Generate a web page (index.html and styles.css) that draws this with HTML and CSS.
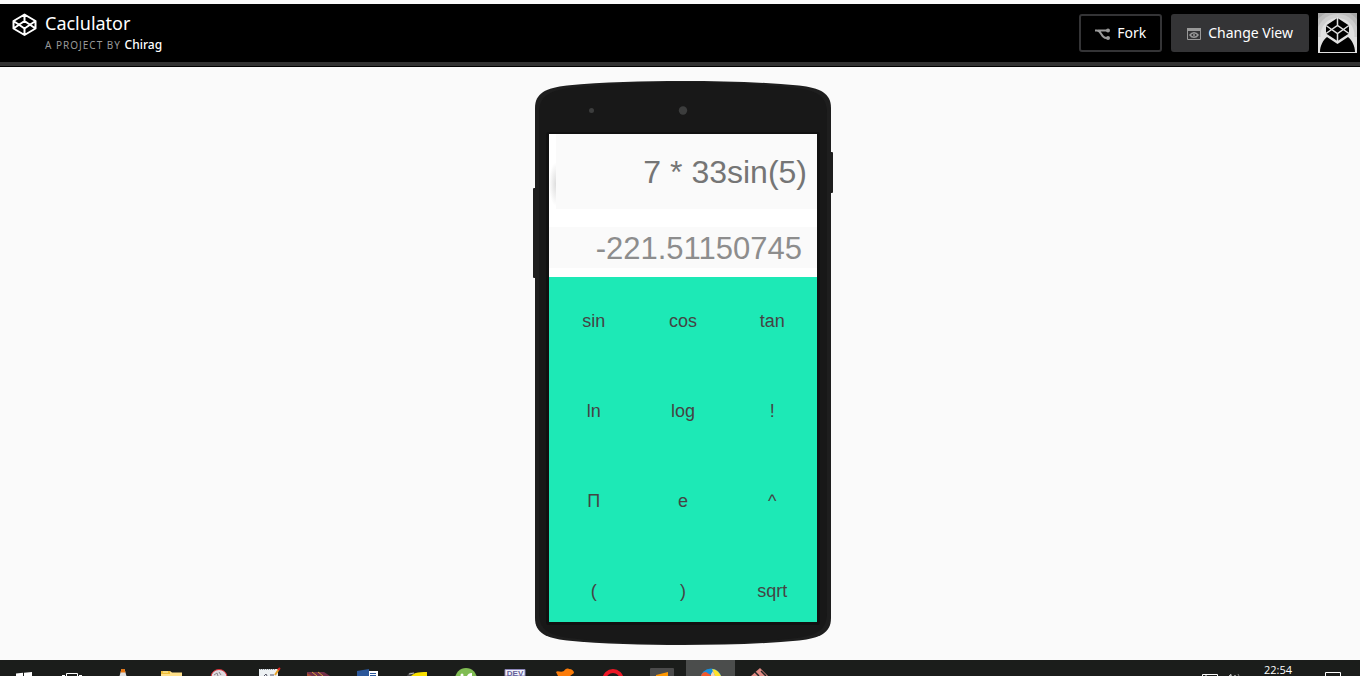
FILE: index.html
```html
<!DOCTYPE html>
<html lang="en">
<head>
<meta charset="utf-8">
<title>Caclulator</title>
<link rel="stylesheet" href="styles.css">
</head>
<body>
<header class="topbar">
  <a class="logo" href="#" aria-label="Home">
    <svg width="25" height="24" viewBox="0 0 25 24" fill="none" stroke="#fff" stroke-width="2" stroke-linejoin="round"><path d="M12.500 1.500 23.500 8v7.500l-11 6.500-11-6.500V8zM12.500 1.500V8M12.500 15.500V22M1.500 8l11 7.500 11-7.500M1.500 15.500l11-7.500 11 7.500"/></svg>
  </a>
  <div class="heading">
    <h1 class="title">Caclulator</h1>
    <p class="byline">A PROJECT BY <a class="author" href="#">Chirag</a></p>
  </div>
  <div class="actions">
    <button class="btn btn-fork" type="button">
      <svg width="15" height="14" viewBox="0 0 15 14" fill="none" stroke="#999" stroke-width="2"><path d="M0 3.500h2c4.500 0 4 7.500 9 7.500h2M3 3.500h10"/><circle cx="13" cy="3.500" r="2" fill="#999" stroke="none"/><circle cx="13" cy="11" r="2" fill="#999" stroke="none"/></svg>
      Fork
    </button>
    <button class="btn btn-view" type="button">
      <svg width="14" height="12" viewBox="0 0 14 12" fill="none" stroke="#999"><path d="M.5.5h13v11H.5z"/><path d="M0 1.500h14" stroke-width="3"/><path d="M3 7c2-3 6-3 8 0-2 3-6 3-8 0z" stroke-width="1.500"/><circle cx="7" cy="7" r="1" fill="#999" stroke="none"/></svg>
      Change View
    </button>
    <a class="avatar" href="#" aria-label="Profile">
      <svg width="39" height="40" viewBox="0 0 39 40"><path fill="#a8a8a8" d="M0 0h39v40H0z"/><circle cx="19.500" cy="22" r="25" fill="#bcbcbc"/><circle cx="19.500" cy="22" r="21" fill="#cecece"/><circle cx="19.500" cy="22" r="17" fill="#e0e0e0"/><path fill="#e0e0e0" d="M0 24h39v16H0z"/><path d="M2 39c0-6 3-12 7-15l10.500 7L30 24c4 3 7 9 7 15z"/><path d="M19.500 5 31 12.500v8L19.500 28 8 20.500v-8z"/><path d="M19.500 4v8.500M19.500 20.500V28M8 12.500l11.500 8 11.500-8M8 20.500l11.500-8 11.500 8" fill="none" stroke="#e0e0e0" stroke-width="1.500"/></svg>
    </a>
  </div>
</header>

<main class="stage">
  <div class="phone">
    <svg class="shell" width="300" height="564" viewBox="0 0 300 564">
      <rect x="0" y="107" width="6" height="90" rx="1" fill="#1e1e1e"/>
      <rect x="294" y="71" width="6" height="41" rx="1" fill="#1e1e1e"/>
      <path fill="#1e1e1e" d="M2 27C2 12 13 7 34 4.500 70 1 110 0 150 0s80 1 116 4.500C287 7 298 12 298 27V537c0 15-11 20-32 22.500C230 563 190 564 150 564s-80-1-116-4.500C13 557 2 552 2 537z"/>
      <path fill="#181818" d="M6 32C6 15 16 10 36 7 70 3 110 1 150 1s80 2 114 6c20 3 30 8 30 25V532c0 17-10 22-30 25-34 4-74 6-114 6s-80-2-114-6C16 554 6 549 6 532z"/>
      <circle cx="58.500" cy="29.500" r="2.500" fill="#3c3d3d"/>
      <circle cx="150" cy="29.500" r="4.200" fill="#3c3d3d"/>
    </svg>
    <div class="screen">
      <div class="expression-row">
        <input class="expression" type="text" aria-label="Expression" value="7 * 33sin(5)" readonly>
      </div>
      <div class="result-row">
        <input class="result" type="text" aria-label="Result" value="-221.51150745" readonly>
      </div>
      <div class="keypad">
        <button class="key" type="button">sin</button>
        <button class="key" type="button">cos</button>
        <button class="key" type="button">tan</button>
        <button class="key" type="button">ln</button>
        <button class="key" type="button">log</button>
        <button class="key" type="button">!</button>
        <button class="key" type="button">Π</button>
        <button class="key" type="button">e</button>
        <button class="key" type="button">^</button>
        <button class="key" type="button">(</button>
        <button class="key" type="button">)</button>
        <button class="key" type="button">sqrt</button>
      </div>
    </div>
  </div>
</main>

<footer class="taskbar">
  <button class="task" type="button" aria-label="Start"><svg width="49" height="16" viewBox="0 0 49 16" fill="#fff"><path d="M16 13.500 23 12.800V16h-7zM24 12.700 32 12v4h-8z"/></svg></button>
  <button class="task" type="button" aria-label="Task view"><svg width="49" height="16" viewBox="0 0 49 16" fill="none" stroke="#fff"><path d="M17.500 17v-3.500h11V17M13 15.500h3M30 15.500h3"/></svg></button>
  <button class="task" type="button" aria-label="Media player"><svg width="49" height="16" viewBox="0 0 49 16"><path d="M23.500 9h3l2 7h-7z" fill="#ddd"/><path d="M23.500 9h3l1 3.500h-5z" fill="#e8730c"/></svg></button>
  <button class="task" type="button" aria-label="Files"><svg width="49" height="16" viewBox="0 0 49 16"><path d="M14 11h9l2 1.500h10V16H14z" fill="#ffe08a"/><path d="M14 11h9v3h-9z" fill="#efbe38"/><path d="M16 12h5" stroke="#fff3ba"/></svg></button>
  <button class="task" type="button" aria-label="Paint tool"><svg width="49" height="16" viewBox="0 0 49 16"><ellipse cx="23" cy="17" rx="8" ry="7.500" fill="#ded9df" stroke="#df2932"/><path d="m18 15 3-2 1 3m1-4 2 3" stroke="#888" fill="none"/></svg></button>
  <button class="task" type="button" aria-label="Notes"><svg width="49" height="16" viewBox="0 0 49 16"><path d="M14 9h19v7H14z" fill="#edf1f3"/><path d="M15 9.500h16" stroke="#8c9398" stroke-dasharray="1 1"/><path d="m19 16 2-2 1 2M25 15h4" stroke="#556" fill="none"/><path d="m30 15 4-6" stroke="#e9a42b" stroke-width="2"/><path d="m33 10 2-2" stroke="#d22" stroke-width="2"/></svg></button>
  <button class="task" type="button" aria-label="Archive"><svg width="49" height="16" viewBox="0 0 49 16"><path d="M13 12h17l6 4H13z" fill="#733049"/><path d="m18 12 5 4M24 12l5 4" stroke="#d6a43b"/><path d="m13 13 5 3h-5z" fill="#a44b32"/></svg></button>
  <button class="task" type="button" aria-label="Documents"><svg width="49" height="16" viewBox="0 0 49 16"><path d="M25 11h10v5H25z" fill="#fff"/><path d="M27 13.500h6M27 15.500h6" stroke="#2b579a"/><path d="m14 11 12-2v7H14z" fill="#2b579a"/></svg></button>
  <button class="task" type="button" aria-label="Editor"><svg width="49" height="16" viewBox="0 0 49 16"><path d="M17 16c3-3 9-4 18-4v4z" fill="#f9e000"/><path d="M16 14c2-2 4-2 7-1l-4 3h-4z" fill="#444"/><path d="m17 14 5-1" stroke="#bbb"/></svg></button>
  <button class="task" type="button" aria-label="Downloads"><svg width="49" height="16" viewBox="0 0 49 16"><circle cx="25" cy="19" r="11" fill="#80bc53"/><circle cx="21" cy="15" r="1.500" fill="#fff"/><path d="M26 16c1-2 2-3 5-3v3z" fill="#fff"/></svg></button>
  <button class="task" type="button" aria-label="Dev"><svg width="49" height="16" viewBox="0 0 49 16"><path d="M15 9.500h20V16H15z" fill="#f0f0fa" stroke="#8c85b9"/><text class="dev-text" x="25" y="16" text-anchor="middle" fill="#666199">DEV</text></svg></button>
  <button class="task" type="button" aria-label="Game"><svg width="49" height="16" viewBox="0 0 49 16"><path d="M17 12c2-2 4 1 8-1 1-2 3-3 5-2 3 0 5 2 5 4l-4 3H19z" fill="#fb7b08"/></svg></button>
  <button class="task" type="button" aria-label="Opera"><svg width="49" height="16" viewBox="0 0 49 16"><ellipse cx="25" cy="19" rx="8.500" ry="8" fill="none" stroke="#ed1725" stroke-width="4"/></svg></button>
  <button class="task" type="button" aria-label="Sublime"><svg width="49" height="16" viewBox="0 0 49 16"><rect x="13" y="8" width="24" height="12" rx="1" fill="#4b4b4b"/><path d="m19 15 12-3v4H19z" fill="#ff9800"/></svg></button>
  <button class="task task-active" type="button" aria-label="Browser"><svg width="49" height="16" viewBox="0 0 49 16"><circle cx="25" cy="19" r="10.500" fill="#168ddb"/><path d="M15 16c1-3 2-4 5-4l6 4z" fill="#f1592c"/><path d="M26 9c4 0 7 3 9 7h-6z" fill="#ffe12b"/><path d="m25 14 2-3 2 5h-4z" fill="#f4d4b6"/></svg></button>
  <button class="task" type="button" aria-label="Git"><svg width="49" height="16" viewBox="0 0 49 16"><path d="m16 16 9-8 8 8z" fill="#e08a83"/><path d="m20 12 4 4M26 11l5 5" stroke="#252525" stroke-width="1.500"/></svg></button>
  <div class="tray">
    <svg width="18" height="16" viewBox="0 0 18 16" fill="none" stroke="#fff"><path d="M1.500 17v-2.500h15V17M5 14v2"/></svg>
    <svg width="14" height="16" viewBox="0 0 14 16" fill="none" stroke="#fff"><path d="m1 17 3-2.500V17M7.500 15l1 1"/><path d="m11 14 1 2" stroke="#888"/></svg>
    <time class="clock">22:54</time>
    <svg width="18" height="16" viewBox="0 0 18 16" fill="none" stroke="#fff"><path d="M1.500 17v-4.500h15V17"/></svg>
  </div>
</footer>
</body>
</html>
```
FILE: styles.css
```css
* {
  box-sizing: border-box;
}

body {
  margin: 0;
  min-height: 100vh;
  display: flex;
  flex-direction: column;
  background: #fafafa;
  font-family: "Liberation Sans", Arial, sans-serif;
}

button,
input {
  font: inherit;
  border: 0;
  border-radius: 0;
  padding: 0;
  margin: 0;
}

a {
  color: inherit;
  text-decoration: none;
}

svg {
  display: block;
}

/* Header */
.topbar {
  display: flex;
  align-items: flex-start;
  margin-top: 4px;
  padding: 9px 3px 9px 12px;
  background: #000;
  border-bottom: 4px solid #333;
  box-shadow: 0 1px 0 #000;
  color: #fff;
  font-family: "Noto Sans", "Open Sans", sans-serif;
}

.heading {
  margin-left: 8px;
}

.title {
  margin: 0;
  font-size: 18px;
  font-weight: 400;
  line-height: 20px;
}

.byline {
  margin: 5px 0 0;
  font-size: 10px;
  line-height: 14px;
  letter-spacing: 1px;
  color: #999;
}

.author {
  color: #fff;
  font-size: 12px;
  font-weight: 500;
  letter-spacing: 0;
}

.actions {
  display: flex;
  align-items: center;
  gap: 9px;
  margin-left: auto;
}

.btn {
  display: flex;
  align-items: center;
  gap: 7px;
  height: 38px;
  padding: 0 14px 2px;
  border: 2px solid #343436;
  border-radius: 3px;
  color: #fff;
  font-size: 14px;
}

.btn svg {
  margin-top: 3px;
}

.btn-fork {
  background: #000;
}

.btn-view {
  background: #343436;
}

/* Phone */
.stage {
  flex: 1;
  display: flex;
  justify-content: center;
  align-items: flex-start;
  padding: 15px 0 15px 6px;
}

.phone {
  position: relative;
  padding: 53px 16px 23px;
}

.shell {
  position: absolute;
  top: 0;
  left: 0;
}

.phone::before {
  content: "";
  position: absolute;
  z-index: 1;
  inset: 51px 13px 20px;
  border-radius: 3px;
  background: #111;
}

.screen {
  position: relative;
  z-index: 2;
  width: 268px;
  height: 488px;
  overflow: hidden;
  background: #fff;
}

.expression-row {
  padding-left: 7px;
  background: radial-gradient(ellipse 7px 22px at 7px 50px, #ddd, #fff);
}

.expression,
.result {
  display: block;
  width: 100%;
  background: #fafafa;
  text-align: right;
  outline: 0;
}

.expression {
  height: 75px;
  padding: 1px 10px 0 0;
  color: #757575;
  font-size: 32px;
}

.result-row {
  padding: 18px 0 9px;
}

.result {
  height: 41px;
  padding: 2px 15px 0 0;
  color: #8d8d8d;
  font-size: 31px;
}

.keypad {
  display: grid;
  grid-template-columns: repeat(3, 1fr);
  grid-auto-rows: 90px;
  background: #1de9b6;
}

.key {
  padding-bottom: 1px;
  background: transparent;
  color: #444;
  font-size: 18px;
}

/* Taskbar */
.taskbar {
  display: flex;
  height: 16px;
  overflow: hidden;
  background: #1b1d1b;
}

.task {
  width: 49px;
  height: 16px;
  background: transparent;
}

.task-active {
  background: #4b4d4c;
}

.dev-text {
  font: bold 8px "Liberation Sans", sans-serif;
}

.tray {
  display: flex;
  margin-left: auto;
  padding-right: 18px;
  gap: 8px;
  color: #fff;
}

.clock {
  margin: 0 24px 0 15px;
  font: 11px/20px "Open Sans", sans-serif;
}
```
